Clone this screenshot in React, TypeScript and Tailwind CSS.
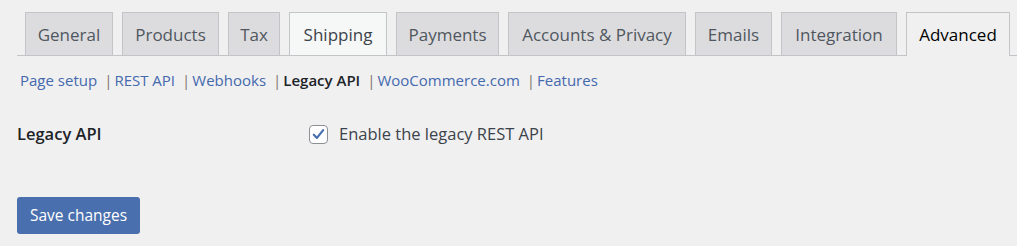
const tabs = [
  { label: "General", w: "w-[88px]" },
  { label: "Products", w: "w-[97px]" },
  { label: "Tax", w: "w-[52px]" },
  { label: "Shipping", w: "w-[98px]", hover: true },
  { label: "Payments", w: "w-[103px]" },
  { label: "Accounts & Privacy", w: "w-[178px]" },
  { label: "Emails", w: "w-[77px]" },
  { label: "Integration", w: "w-[116px]" },
  { label: "Advanced", w: "w-[104px]", active: true },
]

const sections = [
  { label: "Page setup" },
  { label: "REST API" },
  { label: "Webhooks" },
  { label: "Legacy API", current: true },
  { label: "WooCommerce.com" },
  { label: "Features" },
]

function Tab({ label, w, active, hover }: { label: string; w: string; active?: boolean; hover?: boolean }) {
  let cls = "bg-[#dcdcde] text-[#50575e]"
  if (hover) cls = "bg-[#f6f7f7] text-[#3c434a]"
  if (active) cls = "bg-[#f0f0f1] text-black border-b-[#f0f0f1] -mb-px h-[44px]"
  return (
    <a
      href="#"
      className={`ml-[9px] first:ml-2 shrink-0 whitespace-nowrap h-[43px] flex items-center justify-center border border-b-0 border-[#c3c4c7] text-[17px] leading-none ${w} ${cls}`}
    >
      {label}
    </a>
  )
}

export default function App() {
  return (
    <div className="min-h-[246px] bg-[#f0f0f1] pl-[17px] font-['Open_Sans',sans-serif]">
      {/* Tabs */}
      <nav className="flex items-end pt-3 border-b border-[#c3c4c7]">
        {tabs.map((t) => (
          <Tab key={t.label} {...t} />
        ))}
      </nav>

      {/* Section links */}
      <ul className="flex items-center pl-[3px] mt-[14px] text-[15px] leading-5 text-[#646970]">
        {sections.map((s, i) => (
          <li key={s.label} className="flex items-center">
            {s.current ? (
              <span className="font-semibold text-[#1d2327]">{s.label}</span>
            ) : (
              <a href="#" className="text-[#4469ad]">{s.label}</a>
            )}
            {i < sections.length - 1 && <span className="ml-[7px] mr-[2px] text-[#7d746e]">|</span>}
          </li>
        ))}
      </ul>

      {/* Settings row */}
      <div className="flex items-center mt-[34px] h-5">
        <div className="w-[292px] text-[16.5px] font-semibold text-[#1d2327]">Legacy API</div>
        <label className="flex items-center gap-[11px] text-[16.5px] text-[#3c434a]">
          <span className="w-[19px] h-[19px] rounded-[4px] border border-[#8c8f94] bg-white flex items-center justify-center">
            <svg viewBox="0 0 20 20" className="w-[17px] h-[17px]">
              <path d="M4.5 10.2 L8.2 14 L15.5 4.8" fill="none" stroke="#4a6fb0" strokeWidth="2.6" strokeLinecap="round" strokeLinejoin="round" />
            </svg>
          </span>
          Enable the legacy REST API
        </label>
      </div>

      {/* Submit */}
      <button className="mt-[53px] w-[123px] h-[37px] rounded-[3px] bg-[#4a6fae] text-white text-[15.5px]">
        Save changes
      </button>
    </div>
  )
}
